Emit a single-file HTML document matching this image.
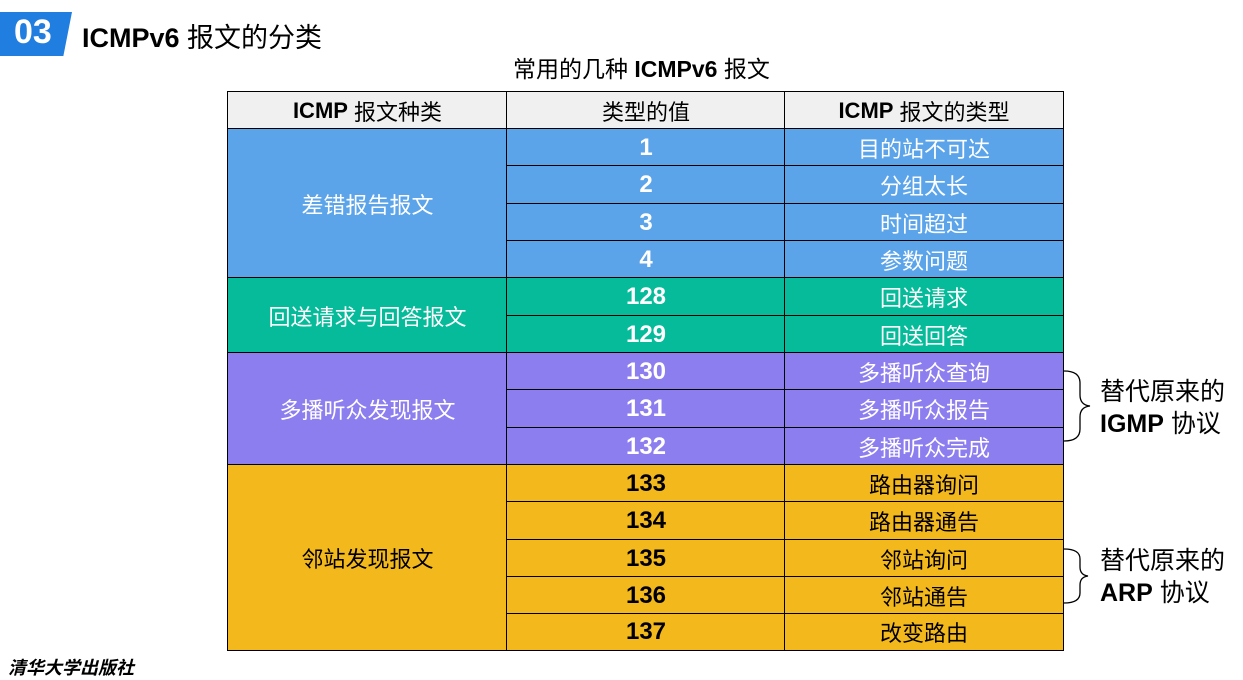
<!DOCTYPE html>
<html><head><meta charset="utf-8"><style>
body{margin:0;width:1243px;height:669px;background:#fff;position:relative;overflow:hidden;font-family:"Liberation Sans","Noto Sans CJK SC",sans-serif;}
.a{position:absolute}
.c{position:absolute;box-sizing:border-box;border:1.5px solid #000;display:flex;align-items:center;justify-content:center;font-size:22px;color:#fff}
.n{font-family:"Liberation Sans Narrow","Liberation Sans","Noto Sans CJK SC",sans-serif;font-weight:bold;font-size:24px}
.h{background:#f0f0f0;color:#000}
.b{background:#5ba4ea}.g{background:#05bb99}.p{background:#8d7eef}.y{background:#f3b81b;color:#000}
.r{font-size:25px;color:#000}
</style></head><body>
<div class="a" style="left:0;top:12px;width:72px;height:44px;background:#1f7ee0;clip-path:polygon(0 0,100% 0,88% 100%,0 100%)"></div>
<div class="a" style="left:14px;top:13px;color:#fff;font-family:'Liberation Sans Narrow','Liberation Sans',sans-serif;font-weight:bold;font-size:34px">03</div>
<div class="a" style="left:82px;top:16px;font-size:27px;color:#000"><b>ICMPv6</b> 报文的分类</div>
<div class="a" style="left:513px;top:50px;font-size:23px;color:#000">常用的几种 <b>ICMPv6</b> 报文</div>

<div class="c h" style="left:227px;top:91px;width:281px;height:39px"><b>ICMP</b>&nbsp;报文种类</div>
<div class="c h" style="left:506px;top:91px;width:280px;height:39px">类型的值</div>
<div class="c h" style="left:784px;top:91px;width:280px;height:39px"><b>ICMP</b>&nbsp;报文的类型</div>

<div class="c b" style="left:227px;top:128px;width:281px;height:151px">差错报告报文</div>
<div class="c g" style="left:227px;top:277px;width:281px;height:77px">回送请求与回答报文</div>
<div class="c p" style="left:227px;top:352px;width:281px;height:114px">多播听众发现报文</div>
<div class="c y" style="left:227px;top:464px;width:281px;height:187px">邻站发现报文</div>

<div class="c b n" style="left:506px;top:128px;width:280px;height:39px">1</div><div class="c b" style="left:784px;top:128px;width:280px;height:39px">目的站不可达</div>
<div class="c b n" style="left:506px;top:165px;width:280px;height:39px">2</div><div class="c b" style="left:784px;top:165px;width:280px;height:39px">分组太长</div>
<div class="c b n" style="left:506px;top:203px;width:280px;height:39px">3</div><div class="c b" style="left:784px;top:203px;width:280px;height:39px">时间超过</div>
<div class="c b n" style="left:506px;top:240px;width:280px;height:39px">4</div><div class="c b" style="left:784px;top:240px;width:280px;height:39px">参数问题</div>
<div class="c g n" style="left:506px;top:277px;width:280px;height:39px">128</div><div class="c g" style="left:784px;top:277px;width:280px;height:39px">回送请求</div>
<div class="c g n" style="left:506px;top:315px;width:280px;height:39px">129</div><div class="c g" style="left:784px;top:315px;width:280px;height:39px">回送回答</div>
<div class="c p n" style="left:506px;top:352px;width:280px;height:39px">130</div><div class="c p" style="left:784px;top:352px;width:280px;height:39px">多播听众查询</div>
<div class="c p n" style="left:506px;top:389px;width:280px;height:39px">131</div><div class="c p" style="left:784px;top:389px;width:280px;height:39px">多播听众报告</div>
<div class="c p n" style="left:506px;top:427px;width:280px;height:39px">132</div><div class="c p" style="left:784px;top:427px;width:280px;height:39px">多播听众完成</div>
<div class="c y n" style="left:506px;top:464px;width:280px;height:39px">133</div><div class="c y" style="left:784px;top:464px;width:280px;height:39px">路由器询问</div>
<div class="c y n" style="left:506px;top:501px;width:280px;height:39px">134</div><div class="c y" style="left:784px;top:501px;width:280px;height:39px">路由器通告</div>
<div class="c y n" style="left:506px;top:539px;width:280px;height:39px">135</div><div class="c y" style="left:784px;top:539px;width:280px;height:39px">邻站询问</div>
<div class="c y n" style="left:506px;top:576px;width:280px;height:39px">136</div><div class="c y" style="left:784px;top:576px;width:280px;height:39px">邻站通告</div>
<div class="c y n" style="left:506px;top:613px;width:280px;height:38px">137</div><div class="c y" style="left:784px;top:613px;width:280px;height:38px">改变路由</div>

<svg class="a" style="left:1062px;top:365px" width="40" height="250" viewBox="0 0 40 250" fill="none" stroke="#000" stroke-width="1.3">
<path d="M2 6 Q18 6 18 18 L18 30 Q18 40 28 41 Q18 42 18 52 L18 64 Q18 76 2 76"/>
<path d="M2 184 Q18 184 18 194 L18 202 Q18 210 26 211 Q18 212 18 220 L18 228 Q18 238 2 238"/>
</svg>
<div class="a r" style="left:1100px;top:376px;line-height:32px">替代原来的<br><b>IGMP</b> 协议</div>
<div class="a r" style="left:1100px;top:545px;line-height:32px">替代原来的<br><b>ARP</b> 协议</div>
<div class="a" style="left:8px;top:654px;font-size:18px;color:#000;font-style:italic;font-weight:bold">清华大学出版社</div>
</body></html>
